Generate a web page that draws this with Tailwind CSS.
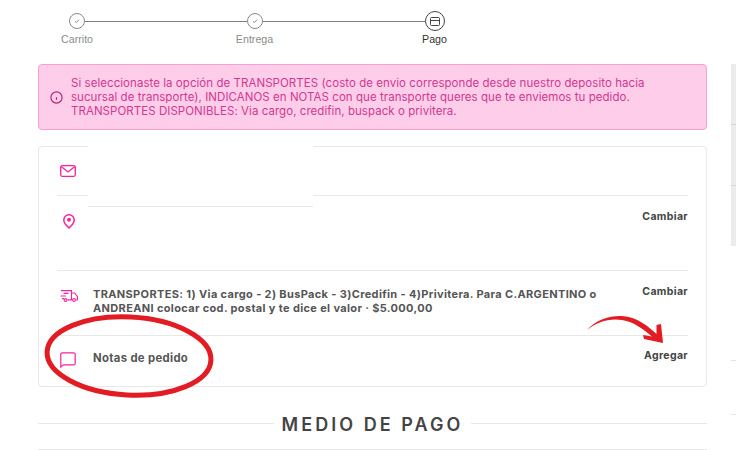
<!DOCTYPE html>
<html lang="es">
<head>
    <meta charset="UTF-8">
    <title>Pago</title>
    <script src="https://cdn.jsdelivr.net/npm/@tailwindcss/browser@4"></script>
</head>
<body class="bg-white h-[450px] overflow-hidden relative flex font-['Inter',sans-serif]">
    <main class="w-[669px] ml-[38px] shrink-0">
        <!-- stepper -->
        <div class="h-[64px] pt-[11px] font-['Liberation_Sans',sans-serif] text-[10.7px]">
            <div class="flex items-center w-[376px] ml-[31px] h-[20px]">
                <span class="w-[16px] h-[16px] rounded-full border border-[#8a8a8a] flex items-center justify-center shrink-0">
                    <svg width="8" height="8" viewBox="0 0 8 8" fill="none" stroke="#888" stroke-width="1"><path d="M2 4.300 3.300 5.500 6 2.700"/></svg>
                </span>
                <span class="flex-1 h-px bg-[#808080]"></span>
                <span class="w-[16px] h-[16px] rounded-full border border-[#8a8a8a] flex items-center justify-center shrink-0">
                    <svg width="8" height="8" viewBox="0 0 8 8" fill="none" stroke="#888" stroke-width="1"><path d="M2 4.300 3.300 5.500 6 2.700"/></svg>
                </span>
                <span class="flex-1 h-px bg-[#808080]"></span>
                <span class="w-[20px] h-[20px] rounded-full border border-[#444] flex items-center justify-center shrink-0">
                    <svg width="10" height="9" viewBox="0 0 10 9" fill="none" stroke="#444" stroke-width="1"><rect x=".5" y=".5" width="9" height="8" rx="1"/><path d="M.5 3.500h9"/></svg>
                </span>
            </div>
            <div class="flex justify-between w-[386px] ml-[23px] mt-[1px] leading-[14px]">
                <span class="text-[#8c8c8c]">Carrito</span>
                <span class="text-[#8c8c8c] mr-[6px]">Entrega</span>
                <span class="text-[#333]">Pago</span>
            </div>
        </div>

        <!-- aviso -->
        <div class="h-[66px] bg-[#fdcdea] border border-[#f9a0d2] rounded-[4px] flex items-center pl-[11px] text-[#d2388f] text-[11.5px] leading-[14px] tracking-[0.05px]">
            <svg class="shrink-0" width="13" height="13" viewBox="0 0 13 13" fill="none" stroke="#b5267f" stroke-width="1.200"><circle cx="6.500" cy="6.500" r="5.600"/><path d="M6.500 6.200v2.600"/></svg>
            <p class="ml-[8px] whitespace-nowrap">Si seleccionaste la opción de TRANSPORTES (costo de envio corresponde desde nuestro deposito hacia<br>sucursal de transporte), INDICANOS en NOTAS con que transporte queres que te enviemos tu pedido.<br>TRANSPORTES DISPONIBLES: Via cargo, credifin, buspack o privitera.</p>
        </div>

        <!-- resumen -->
        <div class="relative mt-[16px] h-[241px] border border-[#e8e8e8] rounded-[4px] px-[18px] text-[#555] font-bold text-[11px] tracking-[0.35px]">
            <div class="h-[49px] border-b border-[#e8e8e8] flex items-center pl-[3px]">
                <svg width="16" height="12" viewBox="0 0 16 12" fill="none" stroke="#f6239c" stroke-width="1.300"><rect x=".7" y=".7" width="14.600" height="10.600" rx="1.500"/><path d="M1.200 1.500 8 7l6.800-5.500"/></svg>
            </div>
            <div class="h-[75px] border-b border-[#e8e8e8] flex justify-between pt-[14px]">
                <svg class="ml-[6px] mt-[4px]" width="12" height="15" viewBox="0 0 12 15" fill="none" stroke="#f6239c" stroke-width="1.500"><path d="M6 14C2.800 11.200 .8 8.900 .8 6a5.200 5.200 0 0 1 10.400 0c0 2.900-2 5.200-5.200 8Z"/><circle cx="6" cy="5.800" r="1.200" fill="#f6239c"/></svg>
                <span class="text-[#444] leading-[14px] text-[10.500px]">Cambiar</span>
            </div>
            <div class="h-[65px] border-b border-[#e8e8e8] flex pt-[14px]">
                <svg class="ml-[3px] mt-[5px] shrink-0" width="18" height="12" viewBox="0 0 18 12" fill="none" stroke="#f6239c" stroke-width="1.100"><path d="M1 .6h10.500v9.300H7.500M3.500 3.400h5M.5 6h5.500M2 8.600h2M11.500 3h3l2.900 3.500v3.400h-1.200M11.500 9.900h.8"/><circle cx="5.500" cy="10" r="1.400"/><circle cx="14" cy="10" r="1.400"/></svg>
                <p class="ml-[15px] w-[520px] leading-[14px] pt-[2px]">TRANSPORTES: 1) Via cargo - 2) BusPack - 3)Credifin - 4)Privitera. Para C.ARGENTINO o ANDREANI colocar cod. postal y te dice el valor · $5.000,00</p>
                <span class="ml-auto text-[#444] leading-[14px] text-[10.500px]">Cambiar</span>
            </div>
            <div class="flex justify-between h-[50px] pb-[5px]">
                <div class="flex items-center">
                    <svg class="ml-[3px] mt-[3px]" width="16" height="16" viewBox="0 0 16 16" fill="none" stroke="#f6239c" stroke-width="1.200"><path d="M.8 15V2.300A1.500 1.500 0 0 1 2.300.8h11.400a1.500 1.500 0 0 1 1.500 1.500v9a1.500 1.500 0 0 1-1.500 1.500H3.500Z"/></svg>
                    <span class="ml-[17px] text-[11.300px]">Notas de pedido</span>
                </div>
                <span class="text-[#444] mt-[13px] leading-[14px] text-[10.500px]">Agregar</span>
            </div>
            <!-- blanked-out contact details -->
            <div class="absolute left-[49px] -top-px w-[225px] h-[61px] bg-white border-b border-[#e8e8e8]"></div>
        </div>

        <!-- medio de pago -->
        <div class="flex items-center gap-[8px] mt-[24px] h-[24px]">
            <span class="flex-1 h-px bg-[#e8e8e8]"></span>
            <h2 class="font-semibold text-[#444] text-[18px] leading-[20px] tracking-[3.050px] pt-[3px]">MEDIO DE PAGO</h2>
            <span class="flex-1 h-px bg-[#e8e8e8]"></span>
        </div>
        <div class="h-px bg-[#e8e8e8] mt-[14px]"></div>
    </main>

    <!-- cut-off side column -->
    <aside class="ml-[24px] flex-1 pt-[64px]">
        <div class="h-[182px] bg-[#ececec] flex flex-col pt-[60px] gap-[60px]">
            <span class="h-px bg-[#d6d6d6]"></span>
            <span class="h-px bg-[#d6d6d6]"></span>
        </div>
        <div class="h-px bg-[#e4e4e4] mt-[114px]"></div>
        <div class="h-px bg-[#e4e4e4] mt-[53px]"></div>
    </aside>

    <!-- hand drawn annotations -->
    <svg class="absolute left-0 top-0 pointer-events-none" width="736" height="450" fill="none">
        <ellipse cx="129" cy="356" rx="82" ry="39" stroke="#e31b23" stroke-width="5" transform="rotate(3 129 356)"/>
        <path d="M587 330C597 319 610 315.500 622 316C637 317 648 326 656.500 334L656.500 325L661 324L663 343L644 339L643 335L652 336.500C643 329 634 322 622 320C609 318 597 322 587 330Z" fill="#e31b23"/>
    </svg>
</body>
</html>
